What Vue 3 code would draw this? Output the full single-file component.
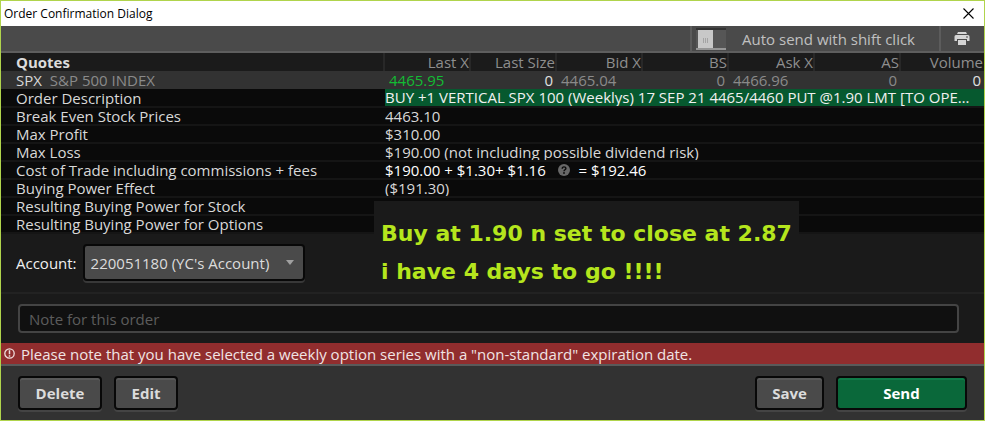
<template>
    <div class="dialog" role="dialog" aria-labelledby="dialog-title">
        <header class="title-bar">
            <h1 id="dialog-title" class="title">Order Confirmation Dialog</h1>
            <button class="close-btn" type="button" aria-label="Close">
                <svg width="11" height="11" viewBox="0 0 11 11">
                    <path d="M0.5 0.5L10.5 10.5M10.5 0.5L0.5 10.5" stroke="#000" stroke-width="1.1" fill="none" />
                </svg>
            </button>
        </header>

        <div class="toolbar">
            <label class="auto-send">
                <input v-model="autoSend" class="toggle" type="checkbox" />
                <span>Auto send with shift click</span>
            </label>
            <button class="print-btn" type="button" aria-label="Print">
                <svg width="16" height="14" viewBox="0 0 16 14">
                    <path d="M4 0h8l1 2H3z" fill="#d4d4d4" />
                    <path d="M2 3h12a1.500 1.500 0 0 1 1.500 1.500V9H13V7H3v2H0.500V4.500A1.500 1.500 0 0 1 2 3z" fill="#d4d4d4" />
                    <path d="M4 8h8v5H4z" fill="#d4d4d4" />
                    <path d="M12 4.500h2v1h-2z" fill="#4a4a4a" />
                </svg>
            </button>
        </div>

        <main class="content">
            <table class="order-table">
                <colgroup>
                    <col class="col-name" />
                    <col v-for="n in 6" :key="n" class="col-quote" />
                    <col class="col-volume" />
                </colgroup>
                <thead>
                    <tr>
                        <th class="quotes" scope="col">Quotes</th>
                        <th v-for="quote in quotes" :key="quote.name" scope="col">{{ quote.name }}</th>
                    </tr>
                </thead>
                <tbody>
                    <tr class="quote-row">
                        <th scope="row">SPX <span class="company">S&amp;P 500 INDEX</span></th>
                        <td v-for="quote in quotes" :key="quote.name" :class="quote.style">{{ quote.value }}</td>
                    </tr>
                    <tr v-for="row in details" :key="row.label" class="detail-row">
                        <th scope="row">{{ row.label }}</th>
                        <td colspan="7" :class="row.style">
                            <div class="detail-value">
                                {{ row.value }}
                                <template v-if="row.total">
                                    <svg class="help" width="12" height="12" viewBox="0 0 12 12" role="img" aria-label="Help">
                                        <circle cx="6" cy="6" r="6" fill="#686868" />
                                        <path d="M4.200 4.700C4.200 2.300 7.900 2.400 7.900 4.500C7.900 5.800 6 5.800 6 7.200" fill="none" stroke="#0a0a0a" stroke-width="1.400" />
                                        <circle cx="6" cy="9" r="0.900" fill="#0a0a0a" />
                                    </svg>
                                    {{ row.total }}
                                </template>
                            </div>
                        </td>
                    </tr>
                </tbody>
            </table>

            <section class="account">
                <label for="account">Account:</label>
                <div class="select-box">
                    <select id="account" v-model="account">
                        <option value="220051180">220051180 (YC's Account)</option>
                    </select>
                    <svg class="arrow" width="8" height="5" viewBox="0 0 8 5">
                        <path d="M0 0h8L4 5z" fill="#a0a0a0" />
                    </svg>
                </div>
            </section>

            <section class="note">
                <input v-model="note" type="text" placeholder="Note for this order" aria-label="Note for this order" />
            </section>

            <div class="annotation">
                <p>Buy at 1.90 n set to close at 2.87</p>
                <p>i have 4 days to go !!!!</p>
            </div>
        </main>

        <div class="warning" role="alert">
            <svg width="11" height="11" viewBox="0 0 11 11">
                <circle cx="5.500" cy="5.500" r="4.700" fill="none" stroke="#f0dede" stroke-width="1.300" />
                <path d="M5.500 2.300v4M5.500 7.300v1.500" stroke="#f0dede" stroke-width="1.500" />
            </svg>
            <span>Please note that you have selected a weekly option series with a "non-standard" expiration date.</span>
        </div>

        <footer class="actions">
            <button class="btn btn-delete" type="button">Delete</button>
            <button class="btn btn-edit" type="button">Edit</button>
            <span class="spacer"></span>
            <button class="btn btn-save" type="button">Save</button>
            <button class="btn btn-send" type="button">Send</button>
        </footer>
    </div>
</template>

<script setup>
import { ref } from 'vue';

const autoSend = ref(false);
const account = ref('220051180');
const note = ref('');

const quotes = [
    { name: 'Last X', value: '4465.95', style: 'price up' },
    { name: 'Last Size', value: '0', style: 'bright' },
    { name: 'Bid X', value: '4465.04', style: 'price' },
    { name: 'BS', value: '0', style: '' },
    { name: 'Ask X', value: '4466.96', style: 'price' },
    { name: 'AS', value: '0', style: '' },
    { name: 'Volume', value: '0', style: 'bright' }
];

const details = [
    {
        label: 'Order Description',
        value: 'BUY +1 VERTICAL SPX 100 (Weeklys) 17 SEP 21 4465/4460 PUT @1.90 LMT [TO OPEN/TO CLOSE]',
        style: 'buy'
    },
    { label: 'Break Even Stock Prices', value: '4463.10' },
    { label: 'Max Profit', value: '$310.00' },
    { label: 'Max Loss', value: '$190.00 (not including possible dividend risk)' },
    {
        label: 'Cost of Trade including commissions + fees',
        value: '$190.00 + $1.30+ $1.16',
        total: '= $192.46',
        style: 'cost'
    },
    { label: 'Buying Power Effect', value: '($191.30)' },
    { label: 'Resulting Buying Power for Stock', value: '' },
    { label: 'Resulting Buying Power for Options', value: '' }
];
</script>

<style>
body {
    background: #323232;
}
</style>

<style scoped>
.dialog {
    border: 1px solid #b0d44c;
    background: #323232;
    color: #d8d8d8;
    font-family: "Open Sans", "Noto Sans", sans-serif;
    font-size: 15px;
    line-height: 18px;
}

button,
input,
select {
    font: inherit;
    color: inherit;
    margin: 0;
    box-sizing: border-box;
}

/* title bar */
.title-bar {
    display: flex;
    align-items: center;
    justify-content: space-between;
    height: 25px;
    padding: 0 10px 0 3px;
    background: #fff;
    color: #000;
}

.title {
    margin: 0;
    font-size: 12px;
    font-weight: normal;
}

.close-btn {
    display: flex;
    padding: 0;
    border: none;
    background: none;
}

/* toolbar */
.toolbar {
    display: flex;
    justify-content: flex-end;
    height: 25px;
    border-bottom: 2px solid #5e5e5e;
    background: #4a4a4a;
}

.auto-send {
    display: flex;
    align-items: center;
    gap: 16px;
    padding: 0 24px 0 4px;
    border-left: 2px solid #5c5c5c;
    color: #c0c0c0;
}

.toggle {
    appearance: none;
    width: 30px;
    height: 22px;
    border-top: 2px solid #333;
    border-bottom: 2px solid #969696;
    background:
        repeating-linear-gradient(90deg, #a4a4a4 0 1px, transparent 1px 2px) 7px 8px / 6px 5px no-repeat,
        linear-gradient(#c8c8c8, #c8c8c8) 2px 0 / 15px 18px no-repeat,
        #565656;
}

.print-btn {
    display: flex;
    align-items: center;
    justify-content: center;
    width: 45px;
    padding: 0 2px 0 0;
    border: none;
    border-left: 2px solid #5c5c5c;
    background: none;
}

/* quotes and order details */
.content {
    position: relative;
    background: #1a1a1a;
}

.order-table {
    width: 100%;
    table-layout: fixed;
    border-collapse: separate;
    border-spacing: 0;
}

.col-quote {
    width: 86px;
}

.col-volume {
    width: 83px;
}

th,
td {
    height: 18px;
    box-sizing: border-box;
    padding: 0;
    font-weight: normal;
    white-space: nowrap;
    text-align: right;
}

th:first-child {
    padding-left: 15px;
    text-align: left;
}

thead th {
    border-right: 2px solid #282828;
    background: #1b1b1b;
    color: #8e8e8e;
}

thead th:last-child {
    padding-right: 1px;
    border-right: none;
}

thead .quotes {
    font-weight: bold;
    color: #dcdcdc;
}

.quote-row {
    background: #323232;
}

.quote-row td {
    padding: 0 4px;
    color: #8a8a8a;
}

.quote-row td.price {
    text-align: left;
}

.quote-row td.up {
    color: #12bc34;
}

.quote-row td.bright {
    color: #e0e0e0;
}

.quote-row td:last-child {
    padding-right: 3px;
}

.company {
    margin-left: 4px;
    color: #8a8a8a;
}

.detail-row {
    background: #0a0a0a;
}

.detail-row th,
.detail-row td {
    border-bottom: 2px solid #151515;
    line-height: 16px;
}

.detail-row td {
    text-align: left;
}

.detail-value {
    overflow: hidden;
    text-overflow: ellipsis;
}

.detail-row .buy {
    color: #f0f0f0;
    line-height: 17px;
}

.buy .detail-value {
    padding-right: 4px;
    background: #06592f;
}

.cost {
    color: #fff;
}

.help {
    margin: 0 5px 0 8px;
}

/* account and note */
.account {
    display: flex;
    align-items: center;
    gap: 6px;
    padding: 10px 15px 11px;
    border-bottom: 2px solid #222;
    color: #f0f0f0;
}

.select-box {
    position: relative;
    display: flex;
}

select {
    appearance: none;
    height: 37px;
    padding: 0 33px 0 6px;
    border: 2px solid #080808;
    border-radius: 4px;
    background: #4a4a4a;
    color: #dcdcdc;
    box-shadow: 0 2px 0 #383838;
}

.arrow {
    position: absolute;
    top: 16px;
    right: 11px;
    pointer-events: none;
}

.note {
    padding: 10px 25px 10px 17px;
}

.note input {
    display: block;
    width: 100%;
    height: 29px;
    padding: 0 9px;
    border: 2px solid #444;
    border-radius: 4px;
    background: #101010;
}

.note input::placeholder {
    color: #5c5c5c;
    opacity: 1;
}

/* trader's remark laid over the dialog */
.annotation {
    position: absolute;
    top: 148px;
    left: 373px;
    width: 425px;
    box-sizing: border-box;
    padding: 14px 0 0 7px;
    background: #1a1a1a;
    color: #b5e61d;
    font-family: "DejaVu Sans", sans-serif;
    font-size: 22px;
    font-weight: bold;
    line-height: 38px;
    white-space: nowrap;
}

.annotation p {
    margin: 0;
}

/* warning and buttons */
.warning {
    display: flex;
    align-items: center;
    gap: 6px;
    height: 21px;
    padding: 0 3px;
    border-bottom: 2px solid #5a5a5a;
    background: #912d2e;
    color: #f0e4e4;
}

.actions {
    display: flex;
    gap: 12px;
    padding: 10px 17px;
    background: #323232;
}

.spacer {
    flex: 1;
}

.btn {
    height: 34px;
    padding: 0;
    border: 2px solid #080808;
    border-radius: 4px;
    background: #4a4a4a;
    color: #dcdcdc;
    font-weight: bold;
    box-shadow: inset 0 2px 0 #585858, 0 2px 0 #444;
}

.btn-delete {
    width: 84px;
}

.btn-edit {
    width: 64px;
}

.btn-save {
    width: 69px;
}

.btn-send {
    width: 131px;
    background: #0a683a;
    color: #fff;
    box-shadow: inset 0 2px 0 #107a48, 0 2px 0 #444;
}
</style>
